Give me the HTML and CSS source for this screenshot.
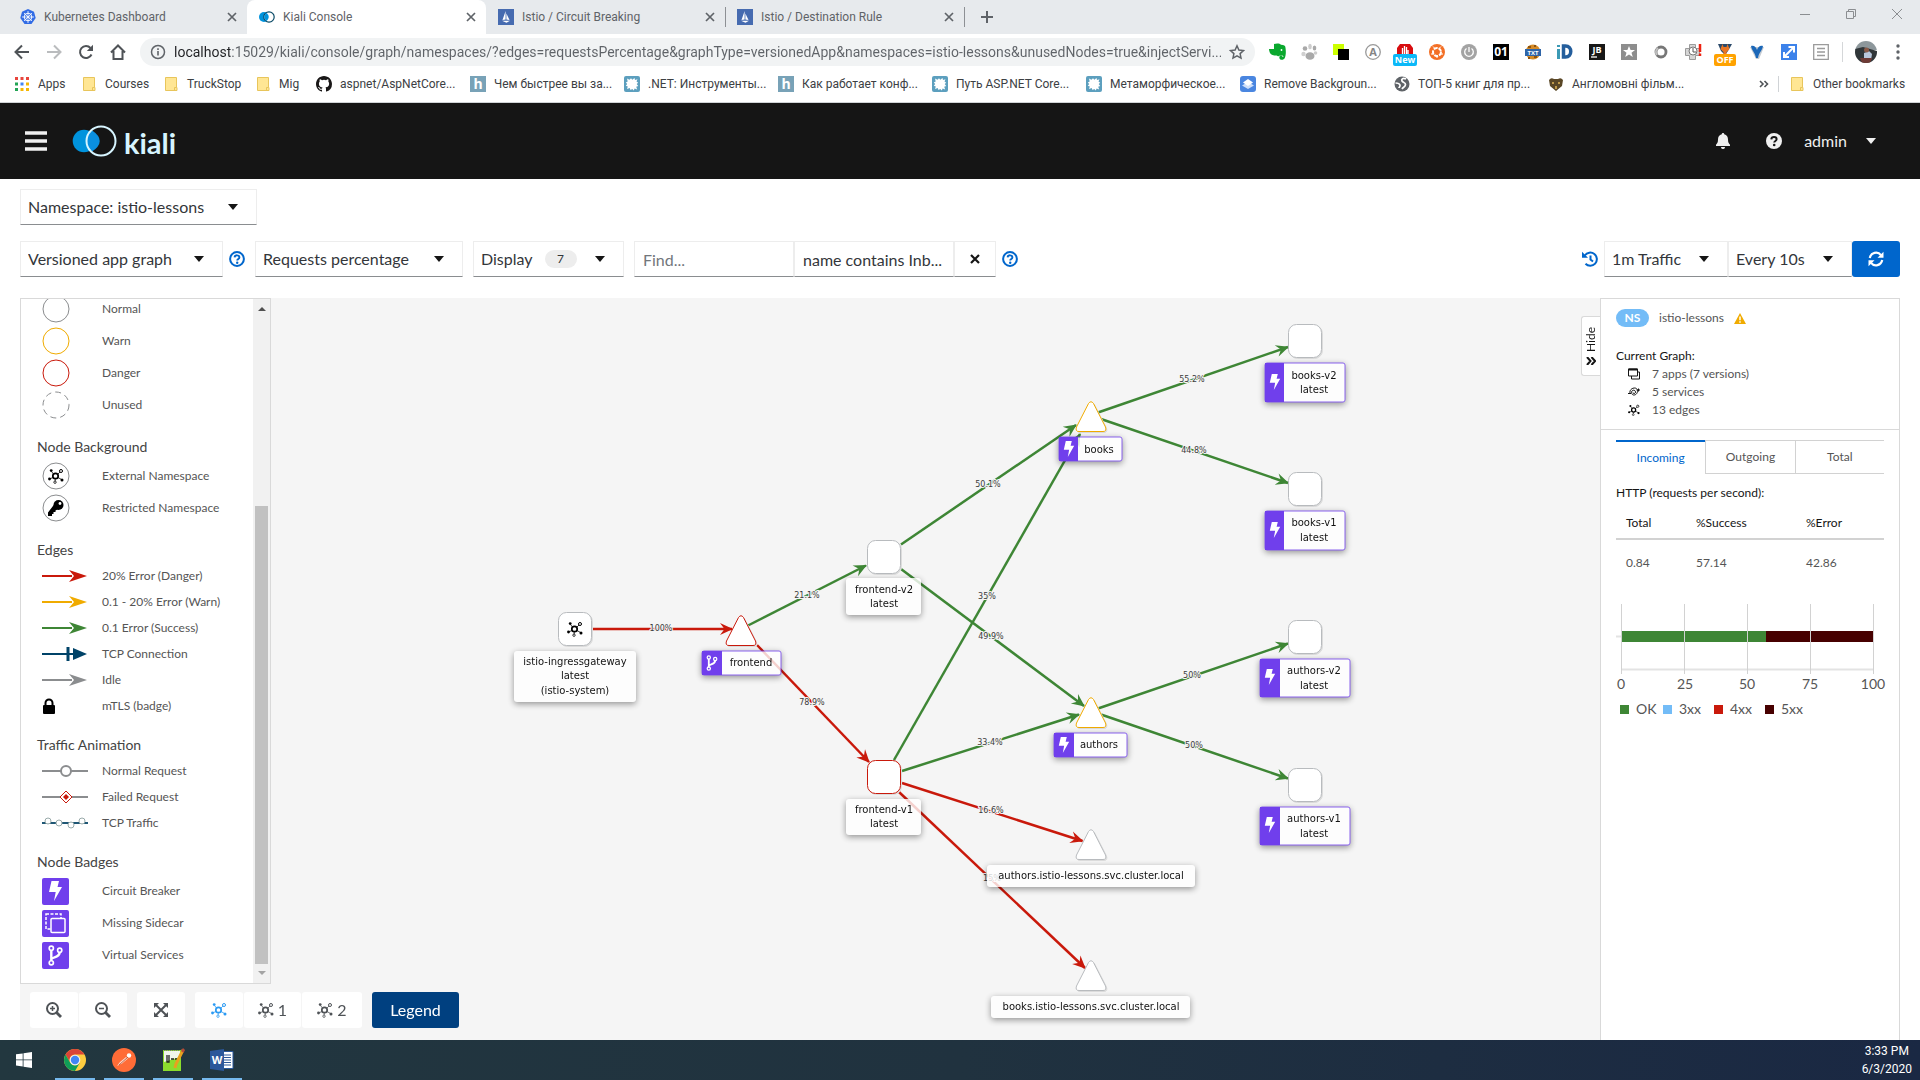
FILE: index.html
```html
<!DOCTYPE html>
<html lang="en">
<head>
<meta charset="utf-8">
<title>Kiali Console</title>
<link rel="stylesheet" href="styles.css">
</head>
<body>
<svg class="defs" aria-hidden="true">
  <defs>
    <symbol id="close" viewBox="0 0 16 16"><path d="M4 4l8 8M12 4l-8 8" stroke="#5f6368" stroke-width="1.7"/></symbol>
    <symbol id="sail" viewBox="0 0 16 16"><path fill="#466bb0" d="M0 0h16v16H0z"/><path fill="#fff" d="M7.6 2v8.600L4.500 11zM8.400 4.500L11.500 11l-3.100-.4zM4 11.800h8L8.500 13.800z"/></symbol>
    <symbol id="folder" viewBox="0 0 16 16"><path d="M2.500 1.500h11v9.500l.5 1v2.500h-11.500z" fill="#ffe694" stroke="#e8c55b"/><path d="M11.500 14.500v-3h2" fill="none" stroke="#e8c55b"/></symbol>
    <symbol id="habr" viewBox="0 0 16 16"><path fill="#78a2b7" d="M0 0h16v16H0z"/><text x="8" y="13" text-anchor="middle" font-family="Open Sans" font-weight="700" font-size="14" fill="#fff">h</text></symbol>
    <symbol id="gearsq" viewBox="0 0 16 16"><rect width="16" height="16" rx="2" fill="#5c9fbe"/><path fill="#fff" d="M3 2.500l2.500 1.200L7 2.200l1.300 1.600L10.500 2l.5 2 2.500-.8-1 2.300 1.700 1.200-1.500 1.400 1.500 2-2 .6 1 2.800-2.600-.9-.8 1.900-1.500-1.600L6.500 14l-.8-1.900L3 13l.8-2.500-2-.8 1.400-1.600L1.800 6.500l1.900-1z"/></symbol>
    <symbol id="help" viewBox="0 0 16 16"><circle cx="8" cy="8" r="6.900" fill="none" stroke="#06c" stroke-width="2"/><path d="M5.600 6.300C5.900 3.600 10.400 3.700 10.400 6.400c0 1.600-2.200 1.500-2.200 3.100" fill="none" stroke="#06c" stroke-width="1.900"/><circle cx="8.200" cy="11.700" r="1.200" fill="#06c"/></symbol>
    <symbol id="topology" viewBox="0 0 16 16"><g fill="none" stroke="currentColor"><circle cx="7.500" cy="8" r="2.700" stroke-width="1.700"/><circle cx="13" cy="3" r="1.500"/><circle cx="7" cy="14.200" r="1.200" stroke-width=".8"/><path stroke-width=".8" d="M10 6l2-2M5.500 6l-2-2.500M5 9.500l-3 1.300M10 9.500l3.500 2M7.200 11v2"/></g><g fill="currentColor"><circle cx="3.200" cy="2.600" r="1.400"/><circle cx="1.500" cy="11" r="1.400"/><circle cx="14" cy="12" r="1.500"/></g></symbol>
    <symbol id="bolt" viewBox="0 0 14 20"><path fill="#fff" d="M3 0h7.500L9 6h4.500L5.500 20l1.700-9H.5z"/></symbol>
    <symbol id="branch" viewBox="0 0 14 20"><g fill="none" stroke="#fff"><circle cx="3" cy="3" r="2" stroke-width="1.600"/><circle cx="11" cy="5" r="2" stroke-width="1.600"/><circle cx="3" cy="17" r="2" stroke-width="1.600"/><path d="M3 5v10M3.200 13.500C4 11 10.500 12.500 11 7" stroke-width="2.300"/></g></symbol>
    <marker id="vee-ok" markerUnits="userSpaceOnUse" markerWidth="16" markerHeight="14" refX="13" refY="7" orient="auto"><path d="M14 7L1 1l4.500 6L1 13z" fill="#3e8635"/></marker>
    <marker id="vee-bad" markerUnits="userSpaceOnUse" markerWidth="16" markerHeight="14" refX="13" refY="7" orient="auto"><path d="M14 7L1 1l4.500 6L1 13z" fill="#c9190b"/></marker>
    <path id="tri" d="M-2.500 1.500Q0-2 2.500 1.500L14.500 25Q16 29.500 12 29.500H-12Q-16 29.500-14.500 25z"/>
    <rect id="box" x="-16.500" y="-16.500" width="33" height="33" rx="8"/>
  </defs>
</svg>

<div class="tabs">
  <div class="tab"><svg class="i16" viewBox="0 0 16 16"><path d="M8 0l6 2.800L15.700 9 11.500 15h-7L.3 9 2 2.800z" fill="#326ce5"/><circle cx="8" cy="8" r="3.800" fill="none" stroke="#fff"/><path d="M8 2v12M2 8h12M4 4l8 8M12 4l-8 8" stroke="#fff" stroke-width=".8"/></svg><span>Kubernetes Dashboard</span><button aria-label="Close tab"><svg class="i16"><use href="#close"/></svg></button></div>
  <div class="tab active"><svg class="i16" viewBox="0 0 16 16"><circle cx="5" cy="8" r="5" fill="#0093dd"/><circle cx="10" cy="8" r="5.200" fill="#fff" stroke="#0a4a66" stroke-width="1.200"/><path d="M7.500 3.800Q12 8 7.500 12.200 3 8 7.500 3.800" fill="#0093dd"/></svg><span>Kiali Console</span><button aria-label="Close tab"><svg class="i16"><use href="#close"/></svg></button></div>
  <div class="tab line"><svg class="i16"><use href="#sail"/></svg><span>Istio / Circuit Breaking</span><button aria-label="Close tab"><svg class="i16"><use href="#close"/></svg></button></div>
  <div class="tab line"><svg class="i16"><use href="#sail"/></svg><span>Istio / Destination Rule</span><button aria-label="Close tab"><svg class="i16"><use href="#close"/></svg></button></div>
  <button class="newtab" aria-label="New tab"><svg class="i16" viewBox="0 0 16 16"><path d="M8 2v12M2 8h12" stroke="#5f6368" stroke-width="2"/></svg></button>
  <div class="wincontrols">
    <button aria-label="Minimize"><svg width="12" height="12"><path d="M1 6.500h10" stroke="#8b8e91"/></svg></button>
    <button aria-label="Restore"><svg width="12" height="12" fill="none" stroke="#8b8e91"><path d="M1.500 3.500h7v7h-7zM3.500 3.500v-2h7v7h-2"/></svg></button>
    <button aria-label="Close window"><svg width="12" height="12"><path d="M1 1l10 10M11 1L1 11" stroke="#8b8e91"/></svg></button>
  </div>
</div>

<div class="navbar">
  <button aria-label="Back"><svg class="i16" viewBox="0 0 16 16" fill="none" stroke="#4f5357" stroke-width="2"><path d="M15 8H2M8 1.500L1.500 8 8 14.500"/></svg></button>
  <button aria-label="Forward"><svg class="i16" viewBox="0 0 16 16" fill="none" stroke="#babcbe" stroke-width="2"><path d="M1 8h13M8 1.500L14.500 8 8 14.500"/></svg></button>
  <button aria-label="Reload"><svg class="i16" viewBox="0 0 16 16"><path d="M13.500 10.500A6 6 0 1 1 12.500 4" fill="none" stroke="#4f5357" stroke-width="2"/><path d="M15 .8v6.200H8.800z" fill="#4f5357"/></svg></button>
  <button aria-label="Home"><svg class="i16" viewBox="0 0 16 16"><path d="M1 8.500L8 1.500l7 7M3.500 7v8h9V7" fill="none" stroke="#4f5357" stroke-width="2"/></svg></button>
  <div class="omnibox">
    <svg class="i16" viewBox="0 0 16 16"><circle cx="8" cy="8" r="6.500" fill="none" stroke="#5f6368" stroke-width="1.500"/><path d="M8 7v4.500M8 4.300v1.600" stroke="#5f6368" stroke-width="1.600"/></svg>
    <input type="text" aria-label="Address" value="localhost:15029/kiali/console/graph/namespaces/?edges=requestsPercentage&amp;graphType=versionedApp&amp;namespaces=istio-lessons&amp;unusedNodes=true&amp;injectServi...">
    <button aria-label="Bookmark this page"><svg class="i16" viewBox="0 0 16 16"><path d="M8 1.800l1.900 4.200 4.600.5-3.400 3.100.9 4.500-4-2.300-4 2.300.9-4.500L1.500 6.500 6.100 6z" fill="none" stroke="#5f6368" stroke-width="1.500"/></svg></button>
  </div>
  <div class="extensions">
    <button aria-label="Evernote"><svg viewBox="0 0 24 24"><path fill="#0aa82e" d="M9 4c3-1 6-.5 7 .7 3 0 4.300.8 4.500 3 .6 4 .4 8-.7 10.300-1 2.500-5.500 2.500-5.500-.5 0-3 3.500-2.500 3.200-.5h1c-.2-1.800-2.200-2.300-3.500-1.500-2 1.500-2 .5-3.500 0-3 0-5.500-.5-6.500-2.500C4.500 11.500 4 10.500 4 9h5z"/><path d="M4.500 8L8.500 4" stroke="#fff"/><circle cx="16.500" cy="10" r=".9" fill="#fff"/></svg></button>
    <button aria-label="Paw"><svg viewBox="0 0 24 24" fill="#a9a9a9"><ellipse cx="13" cy="16" rx="4.500" ry="3.800"/><circle cx="6.500" cy="14" r="2.200" fill="#d0d0d0"/><circle cx="8" cy="8.500" r="2.300"/><ellipse cx="13" cy="6.500" rx="1.800" ry="2.700" fill="#ccc"/><ellipse cx="17.500" cy="8" rx="1.800" ry="2.500"/><circle cx="18.500" cy="13" r="1.800" fill="#ccc"/></svg></button>
    <button aria-label="Squares"><svg viewBox="0 0 24 24"><path fill="#cf0" d="M4 4h11v11H4z"/><path d="M9 9h11v11H9z"/></svg></button>
    <button aria-label="Letter A"><svg viewBox="0 0 24 24"><circle cx="12" cy="12" r="7.300" fill="none" stroke="#9a9a9a" stroke-width="1.300"/><text x="12" y="16" text-anchor="middle" font-size="11" font-weight="700" fill="#858585">A</text></svg></button>
    <button aria-label="Ad blocker"><svg viewBox="0 0 24 24"><path fill="#d80d10" d="M7 4h10l3 4v6H4V8z"/><path d="M9.500 15V8M11.500 15V6M13.500 15V7M15 15v-5" stroke="#fff" stroke-width="1.300"/><rect y="14" width="24" height="12" rx="2" fill="#0bb8f8"/><text x="12" y="23" text-anchor="middle" font-size="9" font-weight="700" fill="#fff">New</text></svg></button>
    <button aria-label="Ball"><svg viewBox="0 0 24 24"><circle cx="12" cy="12" r="8" fill="#f36f25"/><circle cx="12" cy="12" r="4" fill="none" stroke="#fff" stroke-width="2" stroke-dasharray="4 1"/><path d="M8 6.500l2 2M16 6.500l-2 2M6 14h3M18 14h-3M12 18v-2" stroke="#fff"/></svg></button>
    <button aria-label="Power"><svg viewBox="0 0 24 24"><circle cx="12" cy="12" r="8" fill="#a3a3a3"/><path d="M9.500 8.500a4.300 4.300 0 1 0 5 0M12 7v5" fill="none" stroke="#fff" stroke-width="1.300"/></svg></button>
    <button aria-label="Zero one"><svg viewBox="0 0 24 24"><path d="M4 4h16v16H4z"/><text x="12" y="16" text-anchor="middle" font-size="12" font-weight="700" fill="#fff">01</text></svg></button>
    <button aria-label="Text"><svg viewBox="0 0 24 24"><circle cx="12" cy="12" r="7.500" fill="#d68b27"/><path d="M7 7h3M13 6h2M16 17h-3M9 18H7" stroke="#8c5310" stroke-width="2"/><rect x="4" y="9" width="16" height="7" fill="#2f65a8"/><text x="12" y="15" text-anchor="middle" font-size="6" font-weight="700" fill="#fff">TXT</text></svg></button>
    <button aria-label="iD"><svg viewBox="0 0 24 24"><path d="M5.500 9v10M5.500 5v2" stroke="#3b9ab5" stroke-width="3"/><path d="M10.500 6v11h2c7 0 7-11 0-11z" fill="none" stroke="#245e9c" stroke-width="3.500"/></svg></button>
    <button aria-label="JetBrains"><svg viewBox="0 0 24 24"><path fill="#171717" d="M4 4h16v16H4z"/><text x="12" y="13" text-anchor="middle" font-size="9" font-weight="700" fill="#fff">JB</text><path d="M6 17h6" stroke="#fff" stroke-width="1.300"/></svg></button>
    <button aria-label="Star"><svg viewBox="0 0 24 24"><path fill="#8d8d8d" d="M4 4h16v16H4z"/><path fill="#fff" d="M12 6l1.600 4h4.400l-3.500 2.800 1.300 4.200-3.800-2.500L8.200 17l1.300-4.200L6 10h4.400z"/></svg></button>
    <button aria-label="Ring"><svg viewBox="0 0 24 24"><circle cx="12" cy="12" r="5" fill="#fff" stroke="#777" stroke-width="2.800"/><path d="M8 15a5 5 0 0 1 1-7" fill="none" stroke="#c2c2c2" stroke-width="2"/></svg></button>
    <button aria-label="Clock"><svg viewBox="0 0 24 24"><path d="M8.500 4.500h6v4h4v7h-4v4h-6v-4h-4v-7h4z" fill="#d6d6d6" stroke="#9c9c9c"/><circle cx="12" cy="11" r="4" fill="#fff" stroke="#777"/><path d="M12 8v4h3" fill="none" stroke="#555"/><path d="M19 4v8M19 13.500v2.500" stroke="#e21" stroke-width="2.500"/></svg></button>
    <button aria-label="Medal"><svg viewBox="0 0 24 24"><path fill="#2b4a6a" d="M5 4h14l-4 7-3 4-4-4z"/><path fill="#ea7624" d="M9.500 4l1 3h3l1-3 2 5-3 3v3h-3v-3l-3-3z"/><rect x="1" y="14" width="22" height="12" rx="2" fill="#ffa200"/><text x="12" y="23" text-anchor="middle" font-size="9" font-weight="700" fill="#fff">OFF</text></svg></button>
    <button aria-label="Vee"><svg viewBox="0 0 24 24"><path fill="#c5cbd2" d="M5 7h14l-5 12h-3z"/><path fill="#1b67b8" d="M6 6c3-1 5 1 6 4 1-3 3-5 6-4-1 5-4 6-5 12h-2C10 12 7 11 6 6z"/></svg></button>
    <button aria-label="Resize"><svg viewBox="0 0 24 24"><path fill="#3c82ea" d="M4 4h16v16H4z"/><path d="M8 16l8-8M11.500 7H17v5.500M7 12v5h5" fill="none" stroke="#fff" stroke-width="2"/></svg></button>
    <button aria-label="Reader"><svg viewBox="0 0 24 24" fill="none" stroke="#9b9b9b" stroke-width="1.300"><path d="M4.700 4.700h14.600v14.600H4.700zM8 8.500h8M8 12h8M8 15.500h8"/></svg></button>
  </div>
  <span class="vsep"></span>
  <button class="avatar" aria-label="Profile"><svg width="22" height="22" viewBox="0 0 22 22"><clipPath id="av"><circle cx="11" cy="11" r="11"/></clipPath><g clip-path="url(#av)"><path fill="#8d979b" d="M0 0h22v9H0z"/><path fill="#303639" d="M0 8l8-2 14 4v12H0z"/><path fill="#b9c7dc" d="M9 12l5-2 3 3-1 6-7-1z"/><circle cx="11.500" cy="9" r="2.500" fill="#8a5a48"/><path fill="#6e3a35" d="M5 17h12l-2 5H7z"/></g></svg></button>
  <button aria-label="Menu"><svg width="4" height="16"><circle cx="2" cy="2" r="1.700" fill="#5f6368"/><circle cx="2" cy="8" r="1.700" fill="#5f6368"/><circle cx="2" cy="14" r="1.700" fill="#5f6368"/></svg></button>
</div>

<nav class="bookmarks">
  <a href="#"><svg class="i16" viewBox="0 0 16 16"><path fill="#e8453c" d="M1 1h3v3H1zM6.500 1h3v3h-3zM12 1h3v3h-3z"/><path fill="#23a455" d="M1 6.500h3v3H1zM1 12h3v3H1z"/><path fill="#4285f4" d="M6.500 6.500h3v3h-3z"/><path fill="#f6b704" d="M12 6.500h3v3h-3zM6.500 12h3v3h-3zM12 12h3v3h-3z"/></svg><span>Apps</span></a>
  <a href="#"><svg class="i16"><use href="#folder"/></svg><span>Courses</span></a>
  <a href="#"><svg class="i16"><use href="#folder"/></svg><span>TruckStop</span></a>
  <a href="#"><svg class="i16"><use href="#folder"/></svg><span>Mig</span></a>
  <a href="#"><svg class="i16" viewBox="0 0 16 16"><path fill="#191717" d="M8 0C3.580 0 0 3.580 0 8c0 3.540 2.290 6.530 5.470 7.590.4.070.55-.17.55-.38 0-.19-.01-.82-.01-1.490-2.010.37-2.530-.49-2.690-.94-.09-.23-.48-.94-.82-1.130-.28-.15-.68-.52-.01-.53.63-.01 1.080.58 1.230.82.72 1.210 1.870.87 2.330.66.07-.52.28-.87.51-1.070-1.780-.2-3.640-.89-3.640-3.950 0-.87.31-1.590.82-2.150-.08-.2-.36-1.020.08-2.120 0 0 .67-.21 2.200.82a7.600 7.600 0 0 1 4 0c1.530-1.040 2.200-.82 2.200-.82.44 1.100.16 1.920.08 2.120.51.56.82 1.270.82 2.150 0 3.070-1.870 3.750-3.650 3.950.29.25.54.73.54 1.480 0 1.070-.01 1.930-.01 2.200 0 .21.15.46.55.38A8 8 0 0 0 16 8c0-4.420-3.580-8-8-8z"/></svg><span>aspnet/AspNetCore...</span></a>
  <a href="#"><svg class="i16"><use href="#habr"/></svg><span>Чем быстрее вы за...</span></a>
  <a href="#"><svg class="i16"><use href="#gearsq"/></svg><span>.NET: Инструменты...</span></a>
  <a href="#"><svg class="i16"><use href="#habr"/></svg><span>Как работает конф...</span></a>
  <a href="#"><svg class="i16"><use href="#gearsq"/></svg><span>Путь ASP.NET Core...</span></a>
  <a href="#"><svg class="i16"><use href="#gearsq"/></svg><span>Метаморфическое...</span></a>
  <a href="#"><svg class="i16" viewBox="0 0 16 16"><rect width="16" height="16" rx="3" fill="#4a86e0"/><path fill="#cfe0fa" d="M8 6l6 3.500L8 13 2 9.500z"/><path fill="#fff" d="M8 3l5 3.500L8 10 3 6.500z"/></svg><span>Remove Backgroun...</span></a>
  <a href="#"><svg class="i16" viewBox="0 0 16 16"><circle cx="8" cy="8" r="7.500" fill="#5f6368"/><path d="M12 3c-3-1.500-5 0-4 2s3.500 1 3.500 3.500S9 11 8 13M1.500 7c2 0 4 .5 4.500 2s-1 2-1 3" fill="none" stroke="#fff" stroke-width="1.700"/></svg><span>ТОП-5 книг для пр...</span></a>
  <a href="#"><svg class="i16" viewBox="0 0 16 16"><path fill="#5a4726" d="M1 4q2-3 5-1h4q3-2 5 1l-1 6-6 5-6-5z"/><path fill="#c09a4a" d="M4 6h2v2H4zM10 6h2v2h-2zM7 10h2v3H7z"/></svg><span>Англомовні фільм...</span></a>
  <button class="more" aria-label="More bookmarks"><svg width="10" height="8" fill="none" stroke="#4f5357" stroke-width="1.600"><path d="M1 1l3 3-3 3M5.500 1l3 3-3 3"/></svg></button>
  <a href="#" class="other"><svg class="i16"><use href="#folder"/></svg><span>Other bookmarks</span></a>
</nav>

<header class="masthead">
  <button aria-label="Toggle navigation"><svg width="22" height="20"><path d="M0 2h22M0 10h22M0 18h22" stroke="#f0f0f0" stroke-width="3.500"/></svg></button>
  <a href="#" class="brand"><svg width="46" height="32" viewBox="0 0 46 32"><circle cx="12" cy="16" r="11.300" fill="#0093dd"/><circle cx="29" cy="16" r="14.500" fill="#151515"/><path d="M19.500 5Q36 16 19.500 27Q9.500 16 19.500 5" fill="#0a8fe0"/><circle cx="29" cy="16" r="14.500" fill="none" stroke="#d7f5ff" stroke-width="2"/></svg><span>kiali</span></a>
  <div class="tools">
    <button aria-label="Notifications"><svg width="14" height="16" viewBox="0 0 14 16"><path fill="#f0f0f0" d="M7 0c1 0 1.200.7 1.200 1.300C11 2 12 4 12 6.500c0 3 .8 4 2 5.200V13H0v-1.300C1.200 10.500 2 9.500 2 6.500 2 4 3 2 5.800 1.300 5.800.7 6 0 7 0zM5 14h4c0 2.700-4 2.700-4 0z"/></svg></button>
    <button aria-label="Help"><svg class="i16" viewBox="0 0 16 16"><circle cx="8" cy="8" r="8" fill="#f0f0f0"/><path d="M5.300 6.300C5.600 3.300 10.600 3.400 10.600 6.300c0 1.800-2.400 1.600-2.400 3.300" fill="none" stroke="#151515" stroke-width="2"/><circle cx="8.200" cy="12" r="1.300" fill="#151515"/></svg></button>
    <button class="user">admin<svg width="10" height="6"><path fill="#f0f0f0" d="M0 0h10L5 6z"/></svg></button>
  </div>
</header>

<div class="filters">
  <select aria-label="Namespace" class="w-ns"><option>Namespace: istio-lessons</option></select>
</div>
<div class="filters toolbar">
  <select aria-label="Graph type" class="w-type"><option>Versioned app graph</option></select>
  <button class="info" aria-label="Graph type help"><svg class="i16"><use href="#help"/></svg></button>
  <select aria-label="Edge labels" class="w-edge"><option>Requests percentage</option></select>
  <button class="display">Display<span class="count">7</span><svg width="10" height="6"><path fill="#151515" d="M0 0h10L5 6z"/></svg></button>
  <div class="find">
    <input type="text" aria-label="Find" placeholder="Find...">
    <input type="text" aria-label="Hide" value="name contains Inb...">
    <button aria-label="Clear"><svg width="12" height="12"><path d="M2 2l8 8M10 2l-8 8" stroke="#151515" stroke-width="2.200"/></svg></button>
  </div>
  <button class="info" aria-label="Find help"><svg class="i16"><use href="#help"/></svg></button>
  <div class="refresh">
    <button class="history" aria-label="Replay"><svg class="i16" viewBox="0 0 16 16" fill="none" stroke="#06c" stroke-width="2"><path d="M2.800 4.500A6.600 6.600 0 1 1 3.500 12.800M8.500 4.500V8.500l2.500 2"/><path d="M0 .8v6h6z" fill="#06c" stroke="none"/></svg></button>
    <select aria-label="Traffic duration" class="w-dur"><option>1m Traffic</option></select>
    <select aria-label="Refresh interval" class="w-dur"><option>Every 10s</option></select>
    <button class="primary" aria-label="Refresh"><svg class="i16" viewBox="0 0 16 16" fill="none" stroke="#fff" stroke-width="2.200"><path d="M1.800 7A6.300 6.300 0 0 1 13 4.200M14.200 9A6.300 6.300 0 0 1 3 11.800"/><path d="M15.500.8v6H9.500zM.5 15.200v-6h6z" fill="#fff" stroke="none"/></svg></button>
  </div>
</div>

<main>
  <section class="graph">
    <svg class="canvas" role="img" aria-label="Service graph">
      <g transform="translate(-20 -298)">
        <g class="ok">
          <path d="M748 625.500L866 565.500"/><path d="M901 544.500L1076 425"/><path d="M901 569L1084 706"/><path d="M894 760L1080 434"/><path d="M902 771L1079 714.500"/><path d="M1098 412.500L1288 347"/><path d="M1101 419L1288 483"/><path d="M1098 708.500L1288 643.500"/><path d="M1101 714.500L1288 778.500"/>
        </g>
        <g class="bad">
          <path d="M593 629H732"/><path d="M757 645L869 762"/><path d="M902 783L1082.500 841"/><path d="M899 792L1085 968"/>
        </g>
        <g class="rate">
          <text x="661" y="631">100%</text><text x="807" y="598">21.1%</text><text x="812" y="705">78.9%</text><text x="988" y="487">50.1%</text><text x="987" y="599">35%</text><text x="991" y="639">49.9%</text><text x="1192" y="382">55.2%</text><text x="1194" y="453">44.8%</text><text x="990" y="745">33.4%</text><text x="991" y="813">16.6%</text><text x="992" y="881">15%</text><text x="1192" y="678">50%</text><text x="1194" y="748">50%</text>
        </g>
        <g class="node">
          <use href="#box" x="575" y="629"/><use href="#box" x="884" y="557"/><use href="#box" x="884" y="777" class="err"/><use href="#box" x="1305" y="341"/><use href="#box" x="1305" y="489"/><use href="#box" x="1305" y="637"/><use href="#box" x="1305" y="785"/>
          <use href="#tri" x="741" y="616" class="err"/><use href="#tri" x="1091" y="402" class="warn"/><use href="#tri" x="1091" y="698" class="warn"/><use href="#tri" x="1091" y="830"/><use href="#tri" x="1091" y="961"/>
        </g>
        <svg x="567" y="621" width="16" height="16" class="ink"><use href="#topology"/></svg>
        <g class="plate">
          <rect x="514" y="651" width="122" height="51" rx="3"/><rect x="846" y="578" width="75" height="37" rx="3"/><rect x="846" y="799" width="75" height="36" rx="3"/><rect x="987" y="865" width="208" height="22" rx="3"/><rect x="991" y="996" width="199" height="22" rx="3"/>
        </g>
        <g class="plate badge">
          <rect x="702" y="651" width="79" height="24" rx="2"/><rect x="1059" y="437" width="63" height="24" rx="2"/><rect x="1054" y="733" width="73" height="24" rx="2"/><rect x="1265" y="363" width="80" height="39" rx="2"/><rect x="1265" y="511" width="80" height="39" rx="2"/><rect x="1260" y="659" width="90" height="38" rx="2"/><rect x="1260" y="807" width="90" height="38" rx="2"/>
        </g>
        <path class="violet" d="M702 651h20v24h-20zM1059 437h19v24h-19zM1054 733h20v24h-20zM1265 363h19v39h-19zM1265 511h19v39h-19zM1260 659h20v38h-20zM1260 807h20v38h-20z"/>
        <use href="#branch" x="705" y="655" width="14" height="16"/>
        <use href="#bolt" x="1062" y="441" width="14" height="16"/><use href="#bolt" x="1057" y="737" width="14" height="16"/><use href="#bolt" x="1268" y="374" width="14" height="16"/><use href="#bolt" x="1268" y="522" width="14" height="16"/><use href="#bolt" x="1263" y="669" width="14" height="16"/><use href="#bolt" x="1263" y="817" width="14" height="16"/>
        <g class="name">
          <text x="575" y="665">istio-ingressgateway</text><text x="575" y="679">latest</text><text x="575" y="694">(istio-system)</text>
          <text x="751" y="666">frontend</text>
          <text x="884" y="593">frontend-v2</text><text x="884" y="607">latest</text>
          <text x="884" y="813">frontend-v1</text><text x="884" y="827">latest</text>
          <text x="1099" y="453">books</text><text x="1099" y="748">authors</text>
          <text x="1091" y="879">authors.istio-lessons.svc.cluster.local</text><text x="1091" y="1010">books.istio-lessons.svc.cluster.local</text>
          <text x="1314" y="379">books-v2</text><text x="1314" y="393">latest</text>
          <text x="1314" y="526">books-v1</text><text x="1314" y="541">latest</text>
          <text x="1314" y="674">authors-v2</text><text x="1314" y="689">latest</text>
          <text x="1314" y="822">authors-v1</text><text x="1314" y="837">latest</text>
        </g>
      </g>
    </svg>

    <aside class="legend">
      <div class="legend-body">
        <ul>
          <li><svg width="46" height="28"><circle cx="14" cy="14" r="13" fill="none" stroke="#8b8d8f"/></svg>Normal</li>
          <li><svg width="46" height="28"><circle cx="14" cy="14" r="13" fill="none" stroke="#f0ab00"/></svg>Warn</li>
          <li><svg width="46" height="28"><circle cx="14" cy="14" r="13" fill="none" stroke="#c9190b"/></svg>Danger</li>
          <li><svg width="46" height="28"><circle cx="14" cy="14" r="13" fill="none" stroke="#8b8d8f" stroke-dasharray="6 4"/></svg>Unused</li>
        </ul>
        <h2>Node Background</h2>
        <ul>
          <li><svg width="46" height="28"><circle cx="14" cy="14" r="13" fill="none" stroke="#8b8d8f"/><svg x="6" y="6" width="16" height="16" class="ink"><use href="#topology"/></svg></svg>External Namespace</li>
          <li><svg width="46" height="28"><circle cx="14" cy="14" r="13" fill="none" stroke="#8b8d8f"/><circle cx="16.500" cy="11" r="5"/><path d="M12.500 10l4.500 4.500-3.500 2v1.500h-2v2H10v2H6v-3.500z"/><circle cx="18" cy="9.500" r="1.400" fill="#fff"/></svg>Restricted Namespace</li>
        </ul>
        <h2>Edges</h2>
        <ul class="tight">
          <li><svg width="46" height="14"><path d="M0 7h30" stroke="#c9190b" stroke-width="2"/><path fill="#c9190b" d="M45 7L27 1l5 6-5 6z"/></svg>20% Error (Danger)</li>
          <li><svg width="46" height="14"><path d="M0 7h30" stroke="#f0ab00" stroke-width="2"/><path fill="#f0ab00" d="M45 7L27 1l5 6-5 6z"/></svg>0.1 - 20% Error (Warn)</li>
          <li><svg width="46" height="14"><path d="M0 7h30" stroke="#3e8635" stroke-width="2"/><path fill="#3e8635" d="M45 7L27 1l5 6-5 6z"/></svg>0.1 Error (Success)</li>
          <li><svg width="46" height="14"><path d="M0 7h33" stroke="#004368" stroke-width="2"/><path d="M26 0v14" stroke="#004368" stroke-width="3"/><path fill="#004368" d="M45 7L31 1v12z"/></svg>TCP Connection</li>
          <li><svg width="46" height="14"><path d="M0 7h30" stroke="#8b8d8f" stroke-width="2"/><path fill="#8b8d8f" d="M45 7L27 1l5 6-5 6z"/></svg>Idle</li>
          <li><svg width="46" height="16"><path d="M3.500 8V5a3.500 3.500 0 0 1 7 0v3" fill="none" stroke="#000" stroke-width="2"/><rect x="1" y="7" width="12" height="9" rx="1"/></svg>mTLS (badge)</li>
        </ul>
        <h2>Traffic Animation</h2>
        <ul class="tight">
          <li><svg width="46" height="14"><path d="M0 7h46" stroke="#8b8d8f" stroke-width="2"/><circle cx="24" cy="7" r="5" fill="#fff" stroke="#8b8d8f" stroke-width="2"/></svg>Normal Request</li>
          <li><svg width="46" height="14"><path d="M0 7h46" stroke="#8b8d8f" stroke-width="2"/><path d="M24 1l6 6-6 6-6-6z" fill="#fff" stroke="#c9190b"/><path fill="#c9190b" d="M24 4l3 3-3 3-3-3z"/></svg>Failed Request</li>
          <li><svg width="46" height="14"><path d="M0 7h46" stroke="#1f5775" stroke-width="2"/><g fill="#fff" stroke="#9aa"><circle cx="6" cy="5" r="3"/><circle cx="17" cy="7" r="3"/><circle cx="29" cy="9" r="3"/><circle cx="40" cy="5" r="3"/></g></svg>TCP Traffic</li>
        </ul>
        <h2>Node Badges</h2>
        <ul>
          <li><svg width="46" height="28"><rect x="0" y="1" width="27" height="27" rx="2" fill="#703fec"/><use href="#bolt" x="6" y="4" width="15" height="20"/></svg>Circuit Breaker</li>
          <li><svg width="46" height="28" fill="none" stroke="#fff"><rect x="0" y="1" width="27" height="27" rx="2" fill="#703fec" stroke="none"/><rect x="4" y="5" width="15" height="15" stroke-width="1.500" stroke-dasharray="3 1.500"/><rect x="9" y="9.500" width="14" height="14" rx="1" fill="#703fec" stroke-width="1.500"/></svg>Missing Sidecar</li>
          <li><svg width="46" height="28"><rect x="0" y="1" width="27" height="27" rx="2" fill="#703fec"/><use href="#branch" x="6" y="4" width="15" height="21"/></svg>Virtual Services</li>
        </ul>
      </div>
      <div class="scroll"><span class="up"></span><span class="thumb"></span><span class="down"></span></div>
    </aside>

    <div class="cytoolbar">
      <div class="group">
        <button aria-label="Zoom in" class="sq"><svg class="i16" viewBox="0 0 16 16" fill="none" stroke="#4f5357" stroke-width="2"><circle cx="6.500" cy="6.500" r="5.500"/><path d="M10.500 10.500L15 15" stroke-width="2.800"/><path d="M6.500 4v5M4 6.500h5" stroke-width="1.500"/></svg></button>
        <button aria-label="Zoom out" class="sq"><svg class="i16" viewBox="0 0 16 16" fill="none" stroke="#4f5357" stroke-width="2"><circle cx="6.500" cy="6.500" r="5.500"/><path d="M10.500 10.500L15 15" stroke-width="2.800"/><path d="M4 6.500h5" stroke-width="1.500"/></svg></button>
      </div>
      <button aria-label="Zoom to fit" class="sq"><svg class="i16" viewBox="0 0 16 16"><path d="M3 3l10 10M13 3L3 13" stroke="#4f5357" stroke-width="2"/><path fill="#4f5357" d="M1 1h5L1 6zM15 1v5l-5-5zM1 15v-5l5 5zM15 15h-5l5-5z"/></svg></button>
      <div class="group">
        <button aria-label="Default layout" class="sq on"><svg class="i16"><use href="#topology"/></svg></button>
        <button class="l1"><svg class="i16"><use href="#topology"/></svg>1</button>
        <button class="l2"><svg class="i16"><use href="#topology"/></svg>2</button>
      </div>
      <button class="legendbtn">Legend</button>
    </div>

    <button class="hide"><span>Hide</span><svg width="10" height="8" fill="none" stroke="#151515" stroke-width="2"><path d="M1 0l3.500 4L1 8M5.500 0L9 4 5.500 8"/></svg></button>
  </section>

  <aside class="summary">
    <div class="head">
      <div class="ns"><span class="pill">NS</span><a href="#">istio-lessons</a><svg width="12" height="11"><path d="M6 0l6 11H0z" fill="#f0ab00"/><path d="M6 3.500v3.800M6 8.300v1.500" stroke="#fff" stroke-width="1.500"/></svg></div>
      <strong>Current Graph:</strong>
      <p><svg width="12" height="12" fill="none" stroke="#151515"><path d="M.5 1h9v7h-9z"/><path d="M.5 1.500h9" stroke-width="2"/><path d="M9.500 4h2v7h-8V8"/></svg>7 apps (7 versions)</p>
      <p><svg width="12" height="12" fill="none" stroke="#151515"><path d="M2 7C1 2 9 0 9.500 4.500 10 9 4 11 3.500 6.500c0-3 4-3 4-.5 0 2-2.500 2-2.500.5M0 7.500h3M8.500 4H12M10.500 2.500v3"/></svg>5 services</p>
      <p><svg width="12" height="12" class="ink"><use href="#topology"/></svg>13 edges</p>
    </div>
    <div class="body">
      <div class="ptabs"><button class="on">Incoming</button><button>Outgoing</button><button>Total</button></div>
      <strong>HTTP (requests per second):</strong>
      <table>
        <thead><tr><th>Total</th><th>%Success</th><th>%Error</th></tr></thead>
        <tbody><tr><td>0.84</td><td>57.14</td><td>42.86</td></tr></tbody>
      </table>
      <svg class="chart" viewBox="0 0 268 90" role="img" aria-label="Response codes">
        <path d="M5 67.500h253M0 34.500h5" stroke="#e3e3e3" stroke-width="2"/>
        <path fill="#3e8635" d="M5 29h145v11H5z"/><path fill="#470000" d="M150 29h108v11H150z"/>
        <path d="M5.500 2v70M68.500 2v70M131.500 2v70M194.500 2v70M257.500 2v70" stroke="#d2d2d2"/>
        <g text-anchor="middle"><text x="5" y="87">0</text><text x="69" y="87">25</text><text x="131" y="87">50</text><text x="194" y="87">75</text><text x="257" y="87">100</text></g>
      </svg>
      <ul class="key"><li class="k-ok">OK</li><li class="k-3">3xx</li><li class="k-4">4xx</li><li class="k-5">5xx</li></ul>
    </div>
  </aside>
</main>

<footer class="taskbar">
  <button class="start" aria-label="Start"><svg class="i16" viewBox="0 0 16 16"><path fill="#fff" d="M0 2.300l6.700-.9v6.100H0zM7.500 1.300L16 0v7.500H7.500zM0 8.300h6.700v6.200L0 13.600zM7.500 8.300H16V16l-8.500-1.300z"/></svg></button>
  <button class="run" aria-label="Chrome"><svg width="24" height="24" viewBox="0 0 24 24"><circle cx="12" cy="12" r="11" fill="#ffcd40"/><path fill="#db4437" d="M2.500 6.500A11 11 0 0 1 21.500 6.500H12a5.500 5.500 0 0 0-4.800 8.200z"/><path fill="#0f9d58" d="M2.500 6.500A11 11 0 0 0 12 23l4.800-8.200a5.500 5.500 0 0 1-9.600 0z"/><circle cx="12" cy="12" r="5.300" fill="#f1f1f1"/><circle cx="12" cy="12" r="4.200" fill="#4285f4"/></svg></button>
  <button class="run" aria-label="Postman"><svg width="24" height="24" viewBox="0 0 24 24"><circle cx="12" cy="12" r="12" fill="#ff6c37"/><path d="M5 18l3-4 6-5 2 1.500-6 5z" fill="#ffd9c9"/><circle cx="17" cy="7.500" r="2.200" fill="#fff"/><path d="M7 17l9-8" stroke="#b5482a" stroke-width=".8"/></svg></button>
  <button class="run" aria-label="Editor"><svg width="24" height="24" viewBox="0 0 24 24"><path fill="#8bdd2d" d="M2 2h18v21H2z"/><path fill="#f1f5ec" d="M3 3h16v6L3 14z"/><path d="M3 2.500h16" stroke="#777" stroke-dasharray="1 1"/><path d="M6 7v7h2V7M10 11h3M14 11h2" fill="none" stroke="#222" stroke-width="1.300"/><path d="M22 2L15 16l-1 4" fill="none" stroke="#e8a020" stroke-width="3"/><path fill="#b54a38" d="M20 3l2-3 2 2-1.500 3z"/></svg></button>
  <button class="run" aria-label="Word"><svg width="24" height="24" viewBox="0 0 24 24"><path fill="#fff" stroke="#2b579a" d="M11 3.500h12v17H11z"/><path d="M14 7h7M14 9.500h7M14 12h7M14 14.500h7M14 17h7" stroke="#2b579a"/><path fill="#2b579a" d="M0 3l14-2v22L0 21z"/><text x="7" y="16" text-anchor="middle" font-family="Open Sans" font-size="11" font-weight="700" fill="#fff">W</text></svg></button>
  <div class="clock"><span>3:33 PM</span><span>6/3/2020</span></div>
</footer>
</body>
</html>
```

FILE: styles.css
```css
* { box-sizing: border-box; }
body {
  margin: 0;
  min-height: 100vh;
  display: flex;
  flex-direction: column;
  background: #fff;
  color: #151515;
  font: 16px/24px Lato, sans-serif;
}
button, input, select { font: inherit; color: inherit; margin: 0; border-radius: 0; }
button { background: none; border: 0; padding: 0; display: flex; align-items: center; justify-content: center; flex: none; }
input, select { outline: 0; }
a { color: inherit; text-decoration: none; }
ul, p, h2 { margin: 0; padding: 0; list-style: none; }
svg { flex: none; }
.defs { position: absolute; width: 0; height: 0; }
.i16 { width: 16px; height: 16px; }
.ink { color: #000; }

/* browser window */
.tabs, .navbar, .bookmarks, .taskbar { font: 12px/16px Roboto, sans-serif; }
.tabs { display: flex; height: 34px; background: #e7eaed; padding-left: 8px; color: #5f6368; }
.tab { display: flex; align-items: center; width: 239px; padding: 0 7px 0 12px; gap: 8px; white-space: nowrap; position: relative; }
.tab span { flex: 1; }
.tab.active { background: #fff; border-radius: 8px 8px 0 0; }
.tab.line::after { content: ""; width: 1px; height: 20px; background: #8d9094; position: absolute; right: -1px; top: 7px; }
.newtab { width: 46px; }
.wincontrols { display: flex; margin-left: auto; height: 28px; }
.wincontrols button { width: 46px; }
.navbar { display: flex; height: 36px; align-items: center; padding: 0 6px; }
.navbar > button { width: 32px; height: 32px; }
.omnibox { flex: 1; display: flex; align-items: center; height: 28px; margin: 0 6px; padding: 0 10px; gap: 8px; border-radius: 14px; background: #f1f3f4; }
.omnibox input {
  flex: 1; min-width: 0; border: 0; padding: 0; font-size: 14px; line-height: 20px;
  background: linear-gradient(90deg, #202124 56px, #5f6368 56px);
  background-clip: text; -webkit-background-clip: text; color: transparent;
}
.extensions { display: flex; }
.extensions button { width: 32px; }
.extensions svg { width: 24px; height: 24px; overflow: visible; font-family: "Open Sans", sans-serif; }
.vsep { width: 1px; height: 20px; background: #d5d7d9; margin: 0 7px 0 5px; }
.bookmarks {
  display: grid; grid-template-columns: 67px 82px 92px 61px repeat(9, 154px) auto auto;
  justify-content: start; align-items: center; height: 33px; padding: 0 8px 5px 14px;
  border-bottom: 1px solid #d0d3d6; color: #3c4043; white-space: nowrap;
}
.bookmarks a { display: flex; align-items: center; gap: 8px; }
.bookmarks .more { width: 24px; margin-left: 50px; }
.bookmarks .other { border-left: 1px solid #d0d3d6; padding-left: 10px; margin-left: 2px; height: 16px; }

/* masthead */
.masthead { display: flex; align-items: center; height: 76px; padding: 0 44px 0 25px; background: #151515; color: #f0f0f0; }
.brand { display: flex; align-items: center; gap: 6px; margin-left: 25px; }
.brand span { font: 700 29px/32px Lato, sans-serif; color: #d7f5ff; padding-top: 3px; }
.tools { display: flex; margin-left: auto; align-items: center; }
.tools button:nth-child(2) { margin-left: 36px; }
.tools .user { margin-left: 22px; gap: 19px; }

/* filters */
.filters { display: flex; align-items: center; padding: 10px 20px 0; color: #33363a; }
.toolbar { padding: 16px 20px 21px; }
select, .display, .find input, .find button {
  height: 36px; border: 1px solid #ededed; border-bottom-color: #8a8d90; background-color: #fff; padding: 0 7px;
}
select {
  appearance: none;
  background: #fff url("data:image/svg+xml,%3Csvg xmlns='http://www.w3.org/2000/svg' width='10' height='6'%3E%3Cpath d='M0 0h10L5 6z' fill='%23151515'/%3E%3C/svg%3E") no-repeat right 18px center;
}
.w-ns { width: 237px; }
.w-type { width: 203px; }
.w-edge { width: 208px; }
.w-dur { width: 124px; }
.info { width: 32px; padding-right: 4px; }
.display { width: 151px; margin: 0 10px; padding-right: 18px; }
.count { width: 32px; line-height: 18px; border-radius: 9px; background: #ededed; font-size: 12px; margin: 0 auto 0 12px; }
.find { display: flex; }
.find input { width: 160px; padding: 0 8px; }
.find button { width: 42px; }
.find input::placeholder { color: #72767b; opacity: 1; }
.refresh { display: flex; margin-left: auto; }
.history { width: 28px; }
.primary { width: 48px; background: #06c; border-radius: 3px; }

/* graph */
main { flex: 1; display: flex; min-height: 600px; padding-right: 20px; }
.graph { flex: 1; position: relative; margin-left: 20px; background: #f5f5f5; display: flex; flex-direction: column; min-width: 0; }
.canvas { position: absolute; inset: 0; width: 100%; height: 100%; }
.canvas text { text-anchor: middle; font-family: "DejaVu Sans", sans-serif; }
.ok path, .bad path { stroke-width: 2.5; fill: none; }
.ok path { stroke: #3e8635; marker-end: url(#vee-ok); }
.bad path { stroke: #c9190b; marker-end: url(#vee-bad); }
.rate text { font-size: 8px; fill: #3b3b3b; stroke: #f5f5f5; stroke-width: 2px; paint-order: stroke; }
.node { fill: #fff; stroke: #b8bbbe; filter: drop-shadow(1px 1px 0 #dcdcdc); }
.node .err { stroke: #c9190b; }
.node .warn { stroke: #f0ab00; }
.plate { fill: #fff; opacity: .8; filter: drop-shadow(0 2px 3px rgba(0, 0, 0, .5)); }
.badge { stroke: #703fec; }
.violet { fill: #703fec; }
.name text { font-size: 10px; fill: #111; }

.legend { position: relative; flex: 1 1 0px; min-height: 0; width: 251px; display: flex; border: 1px solid #d9d9d9; background: #fff; overflow: hidden; }
.legend-body { flex: 1; display: flex; flex-direction: column; justify-content: flex-end; padding: 0 0 12px 16px; color: #555; font-size: 12px; }
.legend h2 { font-size: 14px; font-weight: 400; line-height: 24px; margin: 14px 0 1px; color: #444; }
.legend li { display: flex; align-items: center; height: 32px; gap: 14px; padding-left: 5px; }
.legend .tight li { height: 26px; }
.scroll { width: 17px; background: #f1f1f1; display: flex; flex-direction: column; align-items: center; }
.up, .down { border: 4px solid transparent; }
.up { border-bottom-color: #505050; border-top: 0; margin-top: 8px; }
.down { border-top-color: #a3a3a3; border-bottom: 0; margin: 7px 0 8px; }
.thumb { width: 13px; background: #c1c1c1; height: 67%; margin-top: auto; }

.cytoolbar { position: relative; display: flex; gap: 10px; padding: 8px 10px 12px; color: #4f5357; }
.cytoolbar button { height: 36px; background: #fff; border-radius: 3px; gap: 4px; }
.cytoolbar .on { color: #2b9af3; }
.group { display: flex; gap: 1px; }
.cytoolbar .sq { width: 48px; }
.cytoolbar .l1 { width: 57px; }
.cytoolbar .l2 { width: 60px; }
.cytoolbar .legendbtn { width: 87px; background: #004080; color: #fff; }
.hide { position: absolute; right: 0; top: 18px; width: 19px; height: 60px; background: #fff; border: 1px solid #d9d9d9; border-right: 0; border-radius: 3px 0 0 3px; flex-direction: column; gap: 5px; font-size: 12px; line-height: 16px; }
.hide span { writing-mode: vertical-rl; transform: rotate(180deg); }

/* summary panel */
.summary { width: 300px; border: 1px solid #d9d9d9; border-bottom: 0; font-size: 12px; line-height: 18px; color: #555; }
.summary strong { display: block; font-weight: 400; color: #151515; }
.head { padding: 10px 15px; height: 131px; border-bottom: 1px solid #d9d9d9; }
.ns { display: flex; align-items: center; gap: 10px; margin-bottom: 20px; }
.pill { width: 33px; border-radius: 9px; background: #73bcf7; color: #fff; font-weight: 700; text-align: center; }
.head p { display: flex; align-items: center; gap: 12px; padding-left: 12px; }
.body { padding: 10px 15px; }
.ptabs { display: grid; grid-template-columns: repeat(3, 1fr); margin-bottom: 10px; }
.ptabs button { height: 34px; border: 1px solid #d2d2d2; border-width: 1px 0 1px 1px; }
.ptabs .on { border-width: 2px 0 0; border-top-color: #06c; color: #06c; }
table { width: 100%; border-collapse: collapse; margin: 1px 0 15px; }
th, td { text-align: left; font-weight: 400; padding: 5px 0 5px 10px; height: 48px; }
th { color: #151515; border-bottom: 2px solid #d2d2d2; height: 36px; padding: 8px 0 4px 10px; }
td { padding: 4px 0 5px 10px; }
th:nth-child(1) { width: 70px; }
th:nth-child(2) { width: 110px; }
.chart { display: block; width: 100%; font-size: 14px; overflow: visible; }
.chart text { fill: #555; }
.key { display: grid; grid-template-columns: 43px 51px 51px auto; font-size: 14px; padding-left: 4px; margin-top: 8px; }
.key li { display: flex; align-items: center; gap: 7px; }
.key li::before { content: ""; width: 9px; height: 9px; background: #3e8635; }
.key .k-3::before { background: #73bcf7; }
.key .k-4::before { background: #c9190b; }
.key .k-5::before { background: #470000; }

/* taskbar */
.taskbar { display: flex; height: 40px; padding-right: 8px; background: linear-gradient(90deg, #22373f, #20323f 50%, #1a2843); color: #fff; }
.taskbar button { width: 40px; border-bottom: 2px solid transparent; padding-top: 2px; }
.taskbar .start { margin: 0 6px 0 4px; }
.taskbar .run { margin: 0 4px 0 5px; border-bottom-color: #76b9ed; }
.clock { margin-left: auto; display: flex; flex-direction: column; align-items: center; padding-top: 2px; line-height: 18px; }
```
